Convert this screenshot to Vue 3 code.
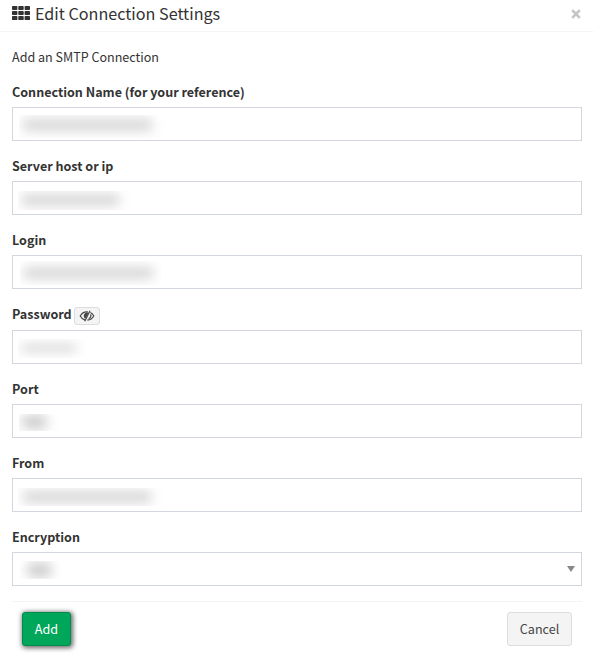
<template>
  <div class="modal-content">
    <div class="modal-header">
      <svg class="icon-th" width="18" height="14" viewBox="0 0 18 14">
        <template v-for="row in 3" :key="row">
          <rect v-for="col in 3" :key="col" :x="(col - 1) * 6.3" :y="(row - 1) * 5" width="5.4" height="4.1" rx="0.8" />
        </template>
      </svg>
      <h4 class="modal-title">Edit Connection Settings</h4>
      <button type="button" class="close" aria-label="Close">
        <svg width="10" height="10" viewBox="0 0 10 10"><path d="M1.2 1.2L8.8 8.8M8.8 1.2L1.2 8.8" /></svg>
      </button>
    </div>

    <div class="modal-body">
      <p class="intro">Add an SMTP Connection</p>

      <div v-for="field in fields" :key="field.name" class="form-group" :class="field.name">
        <label>
          <span>{{ field.label }}</span>
          <button v-if="field.name === 'password'" type="button" class="btn-eye" aria-label="Show password">
            <svg width="16" height="12" viewBox="0 0 16 12">
              <path d="M8.8 1.9C5.5 1.4 2.8 3.2 1.2 6c1.2 2.2 2.8 3.5 4.8 4.1M11.3 2.5C13 3.2 14.1 4.4 14.8 6c-1.4 2.6-3.5 4-6.4 4.1" />
              <path d="M11 0.7L5.8 11.2" />
              <path d="M11.8 4.3c.4 1.8-.5 3.6-2.1 4.3" />
              <path class="pupil" d="M9.7 2.8C6.8 2 4.3 4 4.8 6.6c.1.8.7 1.6 1.4 2.1z" />
            </svg>
          </button>
        </label>
        <div class="form-control">
          <span class="mask"><span class="smudge"></span></span>
          <span v-if="field.name === 'encryption'" class="caret"></span>
        </div>
      </div>

      <div class="modal-footer">
        <button type="button" class="btn btn-success">Add</button>
        <button type="button" class="btn btn-default">Cancel</button>
      </div>
    </div>
  </div>
</template>

<script setup>
const fields = [
  { name: 'name', label: 'Connection Name (for your reference)' },
  { name: 'host', label: 'Server host or ip' },
  { name: 'login', label: 'Login' },
  { name: 'password', label: 'Password' },
  { name: 'port', label: 'Port' },
  { name: 'from', label: 'From' },
  { name: 'encryption', label: 'Encryption' }
]
</script>

<style>
body {
  background: #fff;
}
</style>

<style scoped>
.modal-content,
.modal-content button {
  font-family: "Source Sans Pro", "Noto Sans CJK SC", sans-serif;
}

.modal-content {
  box-sizing: border-box;
  height: 668px;
  overflow: hidden;
  color: #333;
  font-size: 12.55px;
  line-height: 20px;
}

.modal-header {
  display: flex;
  align-items: center;
  box-sizing: border-box;
  height: 32px;
  padding: 0 12px 5px;
  border-bottom: 1px solid #f4f4f4;
}

.icon-th {
  fill: #333;
}

.modal-title {
  flex: 1;
  margin: 0 0 0 5px;
  font-size: 16.15px;
  font-weight: 400;
}

.close {
  display: flex;
  padding: 0;
  border: 0;
  margin-top: 2px;
  background: transparent;
}

.close svg {
  fill: none;
  stroke: #c4c4c4;
  stroke-width: 2.6;
}

.modal-body {
  padding: 15px 11px 0 12px;
}

.intro {
  margin: 0 0 15px;
}

.form-group {
  margin-bottom: 15px;
}

label {
  display: flex;
  align-items: center;
  gap: 2px;
  height: 20px;
  margin-bottom: 5px;
  font-weight: 700;
}

.password label {
  margin-bottom: 6px;
}

.btn-eye {
  display: flex;
  align-items: center;
  justify-content: center;
  box-sizing: border-box;
  width: 26px;
  height: 18px;
  margin-top: 3px;
  padding: 0;
  border: 1px solid #ddd;
  border-radius: 3px;
  background: #f4f4f4;
}

.btn-eye svg {
  fill: none;
  stroke: #444;
  stroke-width: 1.15;
}

.btn-eye .pupil {
  fill: #444;
  stroke: none;
}

.form-control {
  display: flex;
  align-items: flex-start;
  justify-content: space-between;
  box-sizing: border-box;
  height: 34px;
  border: 1px solid #d2d6de;
  background: #fff;
}

/* concealed values */
.mask {
  display: block;
  overflow: hidden;
  width: 148px;
  height: 23px;
  margin: 7px 0 0 6px;
}

.smudge {
  display: block;
  height: 12px;
  margin: 4px 14px 0 3px;
  border-radius: 5px;
  background: #d6d6d6;
  filter: blur(6px);
}

.host .mask {
  width: 116px;
  height: 19px;
  margin: 9px 0 0 5px;
}

.host .smudge {
  margin-top: 3px;
}

.login .mask {
  width: 141px;
  height: 24px;
  margin: 5px 0 0 7px;
}

.login .smudge {
  margin-top: 6px;
  margin-right: 7px;
}

.password .mask {
  width: 73px;
  height: 19px;
  margin: 8px 0 0 5px;
}

.password .smudge {
  height: 8px;
  margin-top: 5px;
  margin-right: 14px;
}

.port .mask {
  width: 42px;
  height: 17px;
  margin: 9px 0 0 6px;
}

.port .smudge {
  height: 14px;
  margin-top: 1px;
  background: #ccc;
}

.from .mask {
  width: 155px;
  height: 18px;
  margin: 9px 0 0 5px;
}

.from .smudge {
  margin: 3px 21px 0 4px;
}

.encryption .mask {
  width: 47px;
  height: 18px;
  margin: 8px 0 0 7px;
}

.encryption .smudge {
  height: 14px;
  margin: 2px 15px 0 7px;
  background: #ccc;
}

.caret {
  margin: 13px 6px 0 0;
  border-top: 6px solid #888;
  border-right: 4px solid transparent;
  border-left: 4px solid transparent;
}

.modal-footer {
  display: flex;
  justify-content: space-between;
  padding: 10px;
  border-top: 1px solid #f4f4f4;
}

.btn {
  box-sizing: border-box;
  height: 34px;
  padding: 0;
  border: 1px solid #ddd;
  border-radius: 3px;
  background: #f4f4f4;
  color: #444;
  font-size: 12.6px;
  line-height: 20px;
}

.btn-success {
  width: 49px;
  border-color: #008d4c;
  background: #00a65a;
  box-shadow: 1px 1px 5px 1px rgba(0, 0, 0, 0.6);
  color: #fff;
}

.btn-default {
  width: 65px;
}
</style>
